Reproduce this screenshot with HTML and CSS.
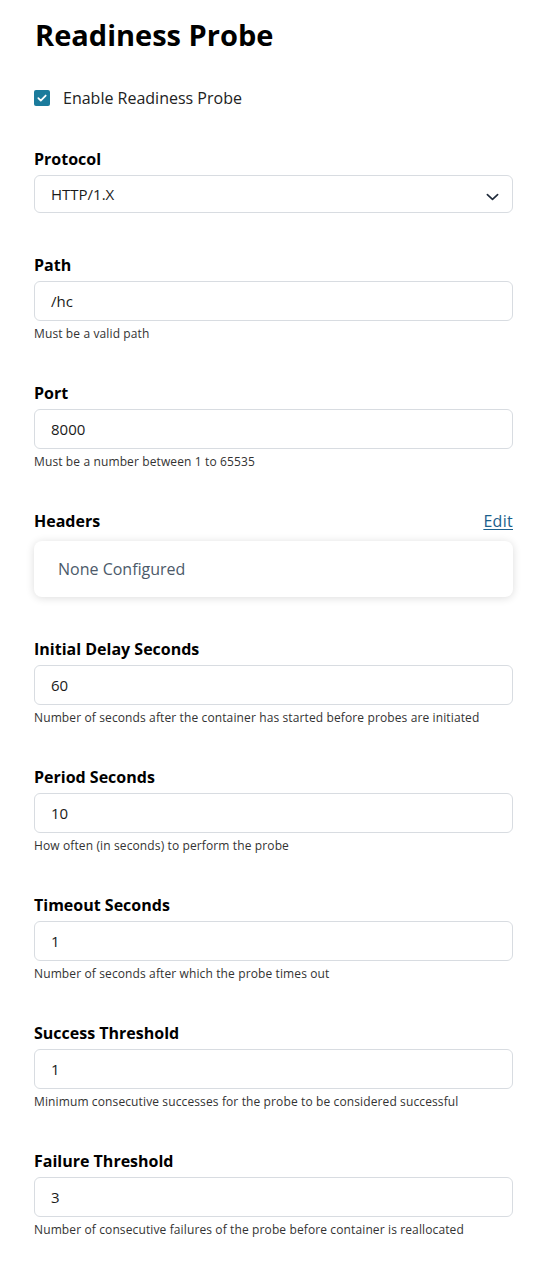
FILE: index.html
```html
<!DOCTYPE html>
<html>
<head>
<meta charset="utf-8">
<link rel="stylesheet" href="styles.css">
</head>
<body>
<main class="page">
  <h1 class="title">Readiness Probe</h1>
  <label class="check">
    <span class="box"><svg viewBox="0 0 16 16" width="16" height="16"><path d="M3.8 8.2l2.8 2.8 5.6-5.8" fill="none" stroke="#fff" stroke-width="2" stroke-linecap="round" stroke-linejoin="round"/></svg></span>
    <span class="check-text">Enable Readiness Probe</span>
  </label>

  <section class="field">
    <div class="label">Protocol</div>
    <div class="input select">
      <span>HTTP/1.X</span>
      <svg class="chev" viewBox="0 0 14 8" width="14" height="8"><path d="M1.5 1.5l5.5 5 5.5-5" fill="none" stroke="#1f2a3a" stroke-width="1.8" stroke-linecap="round" stroke-linejoin="round"/></svg>
    </div>
  </section>

  <section class="field">
    <div class="label">Path</div>
    <div class="input">/hc</div>
    <div class="hint">Must be a valid path</div>
  </section>

  <section class="field">
    <div class="label">Port</div>
    <div class="input">8000</div>
    <div class="hint">Must be a number between 1 to 65535</div>
  </section>

  <section class="field">
    <div class="label-row"><span class="label">Headers</span><a class="edit" href="#">Edit</a></div>
    <div class="card">None Configured</div>
  </section>

  <section class="field">
    <div class="label">Initial Delay Seconds</div>
    <div class="input">60</div>
    <div class="hint">Number of seconds after the container has started before probes are initiated</div>
  </section>

  <section class="field">
    <div class="label">Period Seconds</div>
    <div class="input">10</div>
    <div class="hint">How often (in seconds) to perform the probe</div>
  </section>

  <section class="field">
    <div class="label">Timeout Seconds</div>
    <div class="input">1</div>
    <div class="hint">Number of seconds after which the probe times out</div>
  </section>

  <section class="field">
    <div class="label">Success Threshold</div>
    <div class="input">1</div>
    <div class="hint">Minimum consecutive successes for the probe to be considered successful</div>
  </section>

  <section class="field">
    <div class="label">Failure Threshold</div>
    <div class="input">3</div>
    <div class="hint">Number of consecutive failures of the probe before container is reallocated</div>
  </section>
</main>
</body>
</html>
```
FILE: styles.css
```css
* { box-sizing: border-box; }
html, body { margin: 0; padding: 0; background: #fff; }
body { font-family: "Open Sans", Lato, sans-serif; color: #111; }
.page { padding: 16px 28px 0 34px; display: flex; flex-direction: column; }
.title { margin: 0 0 0 1px; font-size: 29px; line-height: 38px; font-weight: 700; color: #000; }
.check { display: flex; align-items: center; gap: 13px; margin-top: 34px; height: 20px; }
.box { width: 16px; height: 16px; border-radius: 2px; background: #1b7b9c; display: flex; align-items: center; justify-content: center; }
.box svg { width: 14px; height: 14px; }
.check-text { font-size: 16px; color: #222; }
.field { display: flex; flex-direction: column; margin-top: 42px; }
.field:nth-of-type(1) { margin-top: 41px; }
.label { font-size: 16px; font-weight: 700; line-height: 20px; color: #000; margin-bottom: 6px; }
.label-row { display: flex; justify-content: space-between; align-items: baseline; height: 20px; line-height: 20px; }
.label-row .label { margin-bottom: 0; }
.label-row + .card { margin-top: 10px; }
.edit { font-size: 16px; line-height: 20px; letter-spacing: 0.3px; color: #1b5f8c; text-decoration: underline; text-underline-offset: 2px; }
.input { height: 40px; border: 1px solid #d8dce1; border-radius: 6px; padding: 0 16px; display: flex; align-items: center; font-size: 15px; color: #1a1a1a; }
.select { height: 38px; justify-content: space-between; padding-right: 13px; }
.chev { width: 13px; height: 8px; margin-top: 6px; }
.hint { font-size: 12px; letter-spacing: 0.12px; color: #333; margin-top: 6px; line-height: 14px; }
.card { height: 56px; border-radius: 8px; box-shadow: 0 1px 8px rgba(0,0,0,0.14); padding: 0 24px; display: flex; align-items: center; font-size: 16px; color: #4c5a6a; }
```
